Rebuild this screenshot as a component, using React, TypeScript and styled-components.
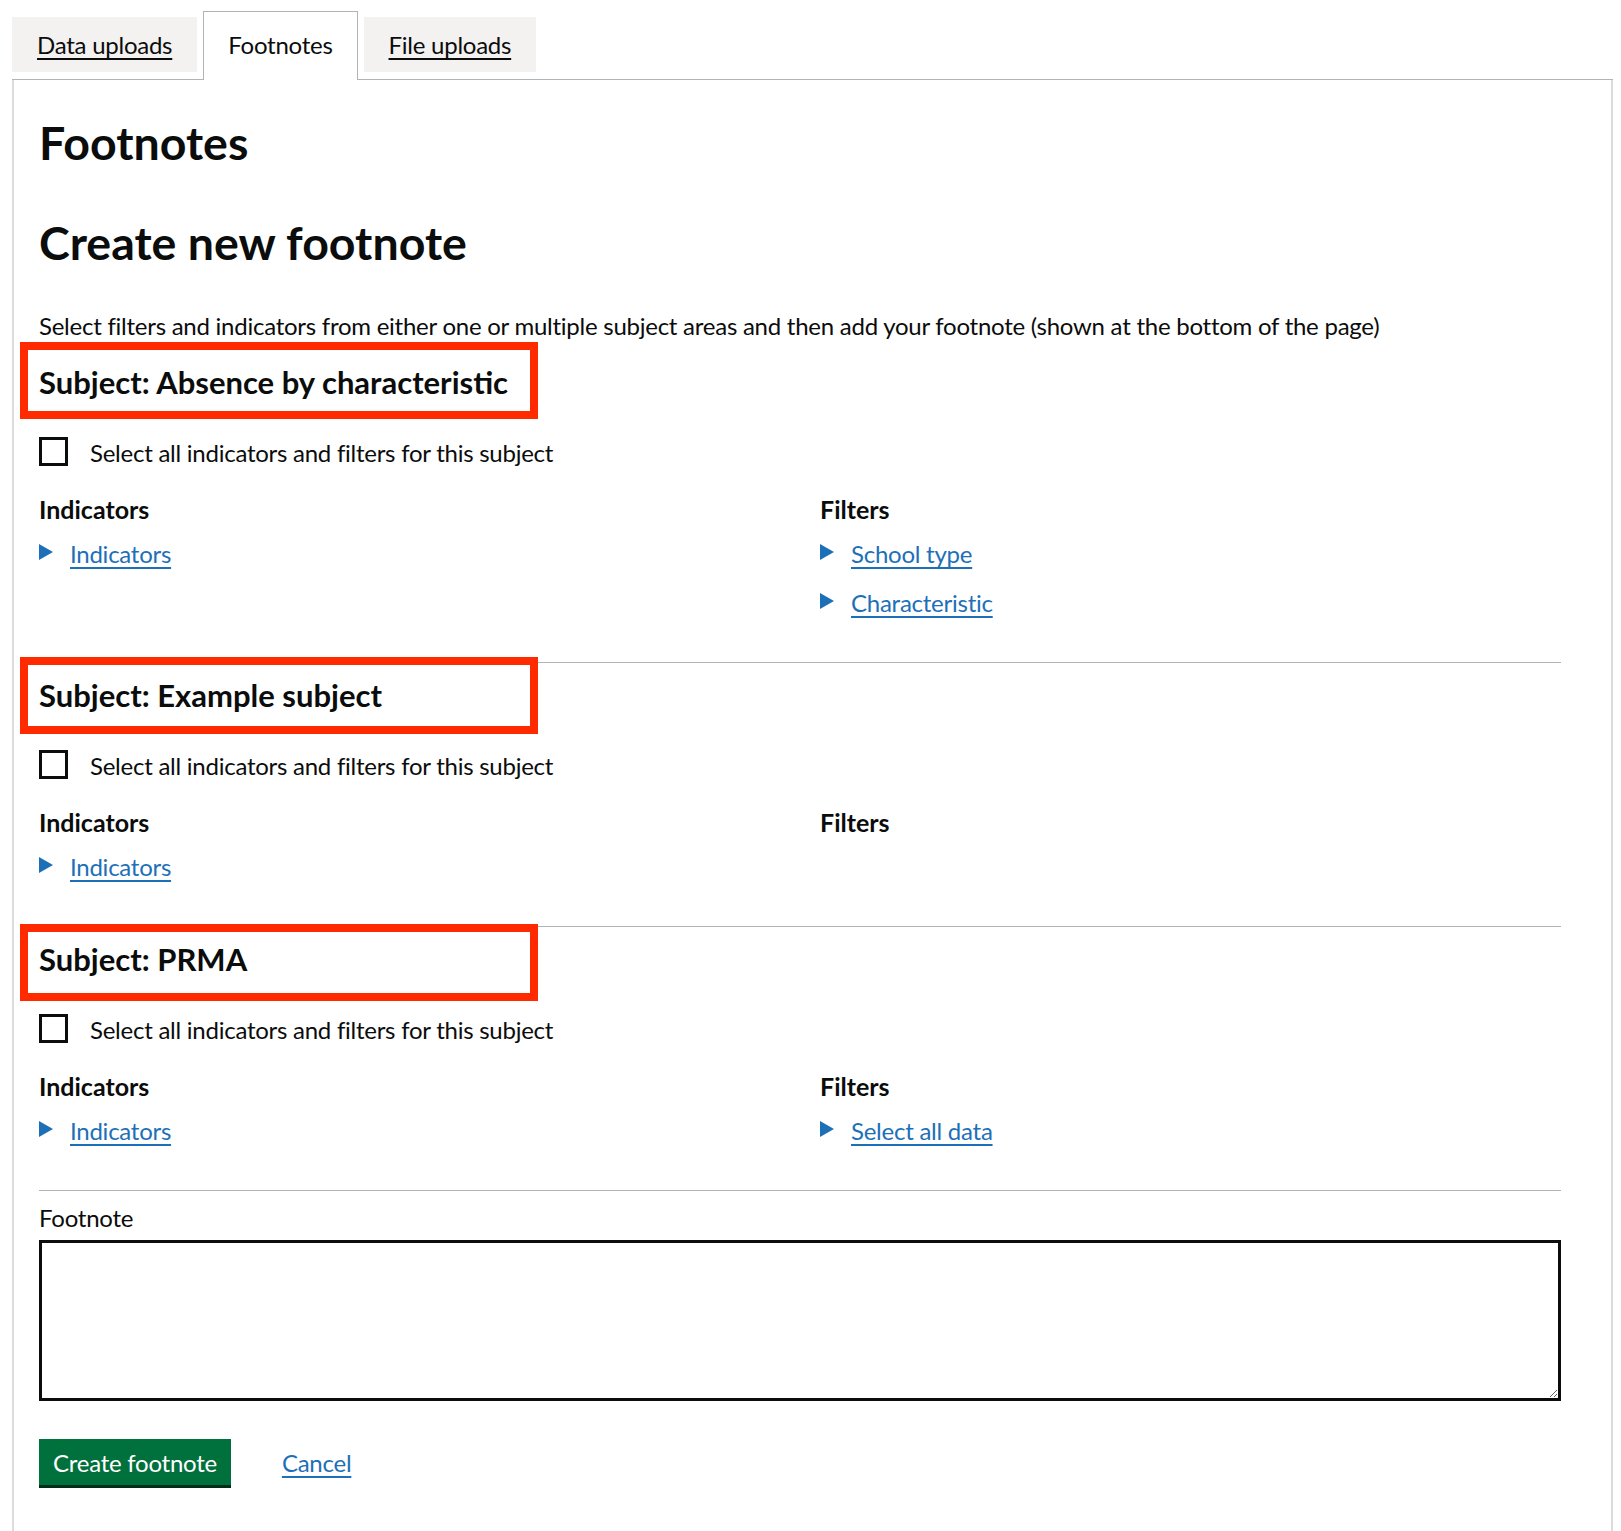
import React from "react";
import styled, { createGlobalStyle } from "styled-components";

const GlobalStyle = createGlobalStyle`
  html, body {
    margin: 0;
    padding: 0;
    background: #ffffff;
  }
  body {
    font-family: Lato, "Liberation Sans", Arial, sans-serif;
    font-size: 24px;
    letter-spacing: -0.25px;
    color: #0b0c0c;
  }
  *, *::before, *::after {
    box-sizing: border-box;
  }
`;

const Page = styled.div`
  padding: 11px 8px 0 12px;
`;

const TabList = styled.ul`
  list-style: none;
  margin: 0;
  padding: 0;
  display: flex;
  align-items: flex-start;
  gap: 6px;
  border-bottom: 1px solid #b1b4b6;
`;

const Tab = styled.li<{ $active?: boolean }>`
  font-size: 24px;
  line-height: 33px;
  padding: ${(p) => (p.$active ? "16px 24px 19px" : "11px 25px 11px")};
  margin-top: ${(p) => (p.$active ? "0" : "6px")};
  margin-bottom: ${(p) => (p.$active ? "-1px" : "0")};
  background: ${(p) => (p.$active ? "#ffffff" : "#f3f2f1")};
  border: ${(p) => (p.$active ? "1px solid #b1b4b6" : "none")};
  border-bottom: none;
`;

const TabLink = styled.a`
  color: #0b0c0c;
  text-decoration: underline;
  text-decoration-thickness: 1.5px;
  text-underline-offset: 4px;
`;

const Panel = styled.section`
  border-left: 2px solid #dcdcdc;
  border-right: 2px solid #dcdcdc;
  padding: 36px 26px 80px 25px;
`;

const Content = styled.div`
  max-width: 1522px;
`;

const PageTitle = styled.h2<{ $gap: number }>`
  font-size: 46.5px;
  line-height: 53px;
  font-weight: 700;
  letter-spacing: 0;
  margin: 0 0 ${(p) => p.$gap}px;
`;

const Lead = styled.p`
  font-size: 24px;
  line-height: 33px;
  margin: 0 0 20px;
`;

const Subject = styled.section<{ $first?: boolean }>`
  border-top: ${(p) => (p.$first ? "none" : "1px solid #b1b4b6")};
  padding-top: ${(p) => (p.$first ? "0" : "12px")};
  padding-bottom: 43px;
`;

const SubjectTitle = styled.h3<{ $boxTop: number }>`
  position: relative;
  font-size: 31px;
  line-height: 40px;
  font-weight: 700;
  letter-spacing: 0;
  margin: 0 0 34px;

  &::after {
    content: "";
    position: absolute;
    left: -19px;
    top: ${(p) => p.$boxTop}px;
    width: 518px;
    height: 77px;
    border: 8px solid #ff2a00;
    pointer-events: none;
  }
`;

const CheckRow = styled.label`
  display: flex;
  align-items: center;
  gap: 22px;
  font-size: 24px;
  line-height: 33px;
  margin-bottom: 24px;
`;

const CheckBox = styled.span`
  width: 29px;
  height: 29px;
  border: 3px solid #0b0c0c;
  background: #ffffff;
  flex: none;
  margin-top: -2px;
`;

const Columns = styled.div`
  display: grid;
  grid-template-columns: 1fr 1fr;
  column-gap: 40px;
`;

const Column = styled.div`
  display: flex;
  flex-direction: column;
`;

const ColumnLabel = styled.div`
  font-size: 25px;
  line-height: 33px;
  font-weight: 700;
  letter-spacing: 0;
  margin-bottom: 11px;
`;

const DetailsList = styled.div`
  display: flex;
  flex-direction: column;
  gap: 16px;
`;

const Summary = styled.div`
  display: flex;
  align-items: center;
  gap: 17px;
  font-size: 24px;
  line-height: 33px;
`;

const Arrow = styled.span`
  width: 0;
  height: 0;
  border-left: 14px solid #1d70b8;
  border-top: 8px solid transparent;
  border-bottom: 8px solid transparent;
  margin-top: -3px;
`;

const Link = styled.a`
  color: #1d70b8;
  text-decoration: underline;
  text-decoration-thickness: 1.5px;
  text-underline-offset: 4px;
`;

const FootnoteField = styled.div`
  border-top: 1px solid #b1b4b6;
  padding-top: 10px;
`;

const FieldLabel = styled.label`
  display: block;
  font-size: 24px;
  line-height: 33px;
  margin-bottom: 6px;
`;

const TextArea = styled.textarea`
  display: block;
  width: 100%;
  height: 161px;
  border: 3px solid #0b0c0c;
  border-radius: 0;
  font: inherit;
  font-size: 24px;
  padding: 6px;
  margin: 0;
`;

const Actions = styled.div`
  display: flex;
  align-items: center;
  gap: 51px;
  margin-top: 38px;
`;

const Button = styled.button`
  font-family: inherit;
  font-size: 24px;
  letter-spacing: -0.25px;
  line-height: 25px;
  color: #ffffff;
  background: #00703c;
  border: none;
  border-radius: 0;
  padding: 11px 14px 10px;
  box-shadow: 0 3px 0 #002d18;
  cursor: pointer;
`;

const ActionLink = styled(Link)`
  font-size: 24px;
  line-height: 33px;
`;

type SubjectData = {
  name: string;
  boxTop: number;
  indicators: string[];
  filters: string[];
};

const subjects: SubjectData[] = [
  {
    name: "Subject: Absence by characteristic",
    boxTop: -20,
    indicators: ["Indicators"],
    filters: ["School type", "Characteristic"],
  },
  {
    name: "Subject: Example subject",
    boxTop: -18,
    indicators: ["Indicators"],
    filters: [],
  },
  {
    name: "Subject: PRMA",
    boxTop: -15,
    indicators: ["Indicators"],
    filters: ["Select all data"],
  },
];

const DetailsGroup = ({ items }: { items: string[] }) => (
  <DetailsList>
    {items.map((item) => (
      <Summary key={item}>
        <Arrow />
        <Link href="#">{item}</Link>
      </Summary>
    ))}
  </DetailsList>
);

export default function App() {
  return (
    <>
      <GlobalStyle />
      <Page>
        <TabList>
          <Tab>
            <TabLink href="#">Data uploads</TabLink>
          </Tab>
          <Tab $active>Footnotes</Tab>
          <Tab>
            <TabLink href="#">File uploads</TabLink>
          </Tab>
        </TabList>
        <Panel>
          <Content>
            <PageTitle $gap={47}>Footnotes</PageTitle>
            <PageTitle $gap={40}>Create new footnote</PageTitle>
            <Lead>
              Select filters and indicators from either one or multiple subject
              areas and then add your footnote (shown at the bottom of the page)
            </Lead>
            {subjects.map((s, i) => (
              <Subject key={s.name} $first={i === 0}>
                <SubjectTitle $boxTop={s.boxTop}>{s.name}</SubjectTitle>
                <CheckRow>
                  <CheckBox />
                  Select all indicators and filters for this subject
                </CheckRow>
                <Columns>
                  <Column>
                    <ColumnLabel>Indicators</ColumnLabel>
                    <DetailsGroup items={s.indicators} />
                  </Column>
                  <Column>
                    <ColumnLabel>Filters</ColumnLabel>
                    <DetailsGroup items={s.filters} />
                  </Column>
                </Columns>
              </Subject>
            ))}
            <FootnoteField>
              <FieldLabel htmlFor="footnote">Footnote</FieldLabel>
              <TextArea id="footnote" />
            </FootnoteField>
            <Actions>
              <Button type="button">Create footnote</Button>
              <ActionLink href="#">Cancel</ActionLink>
            </Actions>
          </Content>
        </Panel>
      </Page>
    </>
  );
}
